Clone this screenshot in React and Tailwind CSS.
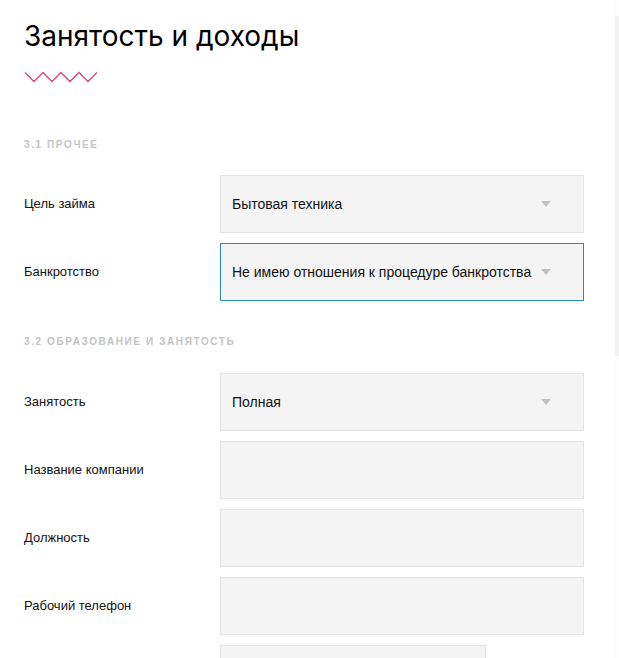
import React from "react";

const Arrow = () => (
  <svg width="10" height="6" viewBox="0 0 10 6" className="shrink-0">
    <path d="M0 0 L10 0 L5 6 Z" fill="#c2c2c2" />
  </svg>
);

const Field = ({ label, value, select, active, narrow }) => (
  <div className="flex items-center">
    <div className="w-[196px] text-[13px] text-[#111]">{label}</div>
    <div
      className={`h-[58px] flex items-center justify-between pl-[11px] pr-[32px] bg-[#f4f4f4] border ${
        active ? "border-[#2a88c9]" : "border-[#e4e4e4]"
      } ${narrow ? "w-[266px]" : "w-[364px]"}`}
    >
      <span className="text-[14px] text-[#111]">{value}</span>
      {select && <Arrow />}
    </div>
  </div>
);

const Section = ({ children }) => (
  <div className="text-[10px] leading-[12px] font-bold tracking-[1.6px] text-[#c4c4c4] uppercase">
    {children}
  </div>
);

export default function App() {
  return (
    <div
      className="relative w-[619px] h-[658px] overflow-hidden bg-white pl-[24px]"
      style={{ fontFamily: '"Liberation Sans", Arial, sans-serif' }}
    >
      <h1
        className="pt-[18px] text-[28px] leading-[36px] text-black"
        style={{ fontFamily: 'Inter, "Noto Sans", sans-serif' }}
      >
        Занятость и доходы
      </h1>
      <svg width="76" height="12" viewBox="0 0 76 12" className="mt-[17px] block">
        <path
          d="M1 1.5 L10 10.5 L19 1.5 L28 10.5 L37 1.5 L46 10.5 L55 1.5 L64 10.5 L73 1.5"
          fill="none"
          stroke="#e0457b"
          strokeWidth="1.3"
        />
      </svg>

      <div className="mt-[56px]">
        <Section>3.1 Прочее</Section>
      </div>
      <div className="mt-[24px] flex flex-col gap-[10px]">
        <Field label="Цель займа" value="Бытовая техника" select />
        <Field
          label="Банкротство"
          value="Не имею отношения к процедуре банкротства"
          select
          active
        />
      </div>

      <div className="mt-[35px]">
        <Section>3.2 Образование и занятость</Section>
      </div>
      <div className="mt-[25px] flex flex-col gap-[10px]">
        <Field label="Занятость" value="Полная" select />
        <Field label="Название компании" value="" />
        <Field label="Должность" value="" />
        <Field label="Рабочий телефон" value="" />
        <Field label="" value="" narrow />
      </div>

      <div className="absolute right-0 top-0 w-[5px] h-full bg-[#fcfcfc]">
        <div className="mt-[16px] ml-[1px] w-[4px] h-[340px] bg-[#f2f2f2]" />
      </div>
    </div>
  );
}
